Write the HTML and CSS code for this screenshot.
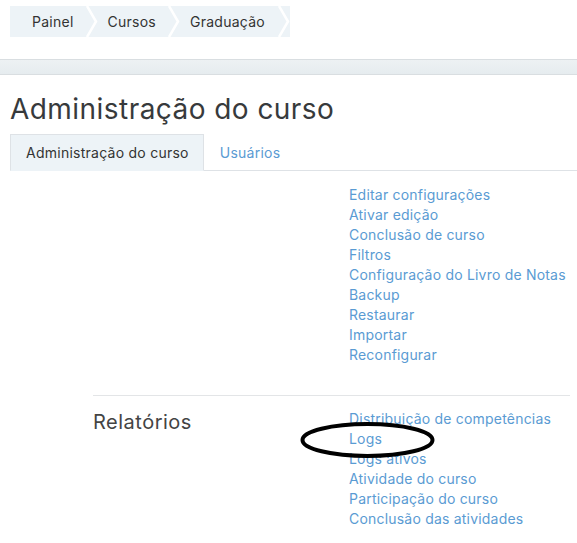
FILE: index.html
```html
<!DOCTYPE html>
<html lang="pt-BR">
<head>
<meta charset="utf-8">
<title>Administração do curso</title>
<link rel="stylesheet" href="styles.css">
</head>
<body>
<nav class="crumbs">
  <a class="crumb" href="#">Painel</a>
  <svg class="chev" viewBox="0 0 12 31" width="12" height="31"><polyline points="1,0 10,15.5 1,31" fill="none" stroke="#fff" stroke-width="2.5"/></svg>
  <a class="crumb" href="#">Cursos</a>
  <svg class="chev" viewBox="0 0 12 31" width="12" height="31"><polyline points="1,0 10,15.5 1,31" fill="none" stroke="#fff" stroke-width="2.5"/></svg>
  <a class="crumb" href="#">Graduação</a>
  <svg class="chev last" viewBox="0 0 12 31" width="12" height="31"><polyline points="1,0 10,15.5 1,31" fill="none" stroke="#fff" stroke-width="2.5"/></svg>
</nav>
<div class="band"></div>
<main class="page">
  <h1 class="title">Administração do curso</h1>
  <ul class="tabs">
    <li class="tab active">Administração do curso</li>
    <li class="tab"><a href="#">Usuários</a></li>
  </ul>
  <div class="sections">
    <section class="sec first">
      <h2 class="label"></h2>
      <ul class="links">
        <li><a href="#">Editar configurações</a></li>
        <li><a href="#">Ativar edição</a></li>
        <li><a href="#">Conclusão de curso</a></li>
        <li><a href="#">Filtros</a></li>
        <li><a href="#">Configuração do Livro de Notas</a></li>
        <li><a href="#">Backup</a></li>
        <li><a href="#">Restaurar</a></li>
        <li><a href="#">Importar</a></li>
        <li><a href="#">Reconfigurar</a></li>
      </ul>
    </section>
    <section class="sec">
      <h2 class="label">Relatórios</h2>
      <ul class="links">
        <li><a href="#">Distribuição de competências</a></li>
        <li><a href="#">Logs</a></li>
        <li><a href="#">Logs ativos</a></li>
        <li><a href="#">Atividade do curso</a></li>
        <li><a href="#">Participação do curso</a></li>
        <li><a href="#">Conclusão das atividades</a></li>
      </ul>
    </section>
  </div>
</main>
<svg class="mark" width="577" height="543" viewBox="0 0 577 543"><ellipse cx="367.5" cy="440" rx="65" ry="16" fill="none" stroke="#000" stroke-width="4"/></svg>
</body>
</html>
```
FILE: styles.css
```css
* { box-sizing: border-box; }
html, body { margin: 0; padding: 0; background: #fff; }
body {
  font-family: Inter, "Open Sans", "Liberation Sans", sans-serif;
  color: #343a40;
  width: 577px;
  height: 543px;
  overflow: hidden;
  position: relative;
}
a { text-decoration: none; color: #5a9bd3; }

.crumbs {
  display: flex;
  align-items: center;
  margin: 6px 0 0 10px;
  width: 280px;
  height: 31px;
  background: #edf3f7;
  padding-left: 22px;
  font-size: 14px;
  letter-spacing: 0.25px;
}
.crumb { color: #333; line-height: 30px; }
.chev { display: block; margin: 0 10px 0 12px; flex: none; }
.chev.last { margin-right: 0; margin-left: auto; }

.band {
  margin-top: 22px;
  height: 16px;
  background: linear-gradient(#edf1f3, #e6ecef);
  border-top: 1px solid #d9dee1;
  border-bottom: 1px solid #d9dee1;
}

.page { padding-left: 10px; }
.title {
  margin: 16px 0 0;
  font-size: 28px;
  font-weight: 400;
  line-height: 36px;
  letter-spacing: 0.45px;
  color: #373a3c;
}
.tabs {
  list-style: none;
  margin: 7px 0 0;
  padding: 0;
  display: flex;
  border-bottom: 1px solid #dee2e6;
  font-size: 14px;
  letter-spacing: 0.25px;
}
.tab {
  height: 37px;
  display: flex;
  align-items: center;
  padding: 0 14px 0 15px;
  margin-bottom: -1px;
  border: 1px solid transparent;
}
.tab.active {
  background: #edf3f7;
  border-color: #dee2e6 #dee2e6 transparent;
  color: #333;
}
.sections { margin: 14px 7px 0 83px; }
.sec {
  display: grid;
  grid-template-columns: 256px 1fr;
  border-top: 1px solid #e3e5e7;
  padding: 13px 0 30px;
}
.sec.first { border-top: 0; padding-top: 0; }
.label {
  margin: 0;
  font-size: 20px;
  font-weight: 400;
  line-height: 26px;
  letter-spacing: 0.5px;
  color: #444;
}
.links {
  list-style: none;
  margin: 0;
  padding: 0;
  font-size: 14px;
  line-height: 20px;
  letter-spacing: 0.2px;
}
.mark { position: absolute; left: 0; top: 0; pointer-events: none; }
```
